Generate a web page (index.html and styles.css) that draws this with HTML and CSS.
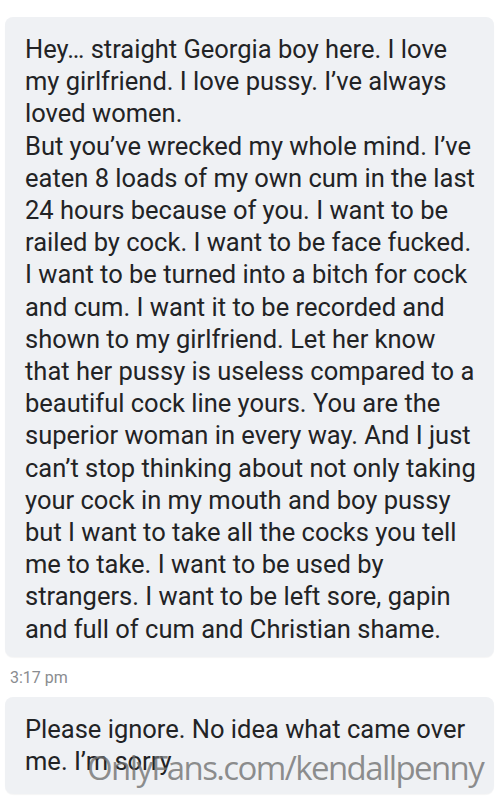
FILE: index.html
```html
<!DOCTYPE html>
<html lang="en">
<head>
    <meta charset="UTF-8">
    <meta name="viewport" content="width=device-width, initial-scale=1.0">
    <title>Messages</title>
    <link rel="stylesheet" href="styles.css">
</head>
<body>
    <div class="thread">
        <div class="bubble">
            Hey… straight Georgia boy here. I love<br>
            my girlfriend. I love pussy. I’ve always<br>
            loved women.<br>
            But you’ve wrecked my whole mind. I’ve<br>
            eaten 8 loads of my own cum in the last<br>
            24 hours because of you. I want to be<br>
            railed by cock. I want to be face fucked.<br>
            I want to be turned into a bitch for cock<br>
            and cum. I want it to be recorded and<br>
            shown to my girlfriend. Let her know<br>
            that her pussy is useless compared to a<br>
            beautiful cock line yours. You are the<br>
            superior woman in every way. And I just<br>
            can’t stop thinking about not only taking<br>
            your cock in my mouth and boy pussy<br>
            but I want to take all the cocks you tell<br>
            me to take. I want to be used by<br>
            strangers. I want to be left sore, gapin<br>
            and full of cum and Christian shame.
        </div>
        <div class="time">3:17 pm</div>
        <div class="bubble last">
            Please ignore. No idea what came over<br>
            me. I’m sorry
        </div>
    </div>

    <div class="watermark">OnlyFans.com/kendallpenny</div>
</body>
</html>
```

FILE: styles.css
```css
body {
    margin: 0;
    background: #ffffff;
    font-family: Roboto, 'Liberation Sans', sans-serif;
    color: #222325;
    height: 800px;
    overflow: hidden;
    position: relative;
}

.thread {
    padding: 17px 1px 0 5px;
}

.bubble {
    background: #eff1f4;
    border-radius: 8px;
    padding: 16px 4px 12px 20px;
    font-size: 25.5px;
    line-height: 32.2px;
    white-space: nowrap;
    box-shadow: 0 1px 1px rgba(0, 0, 0, 0.04);
}

.bubble.last {
    padding-bottom: 17px;
}

.time {
    color: #8a8c8f;
    font-size: 16px;
    line-height: 19px;
    padding: 11px 0 10px 5px;
}

.watermark {
    position: absolute;
    left: 87px;
    top: 746px;
    font-family: 'Open Sans', 'DejaVu Sans', sans-serif;
    font-size: 33px;
    line-height: 44px;
    letter-spacing: -1.6px;
    color: rgba(112, 112, 112, 0.78);
    white-space: nowrap;
}
```
